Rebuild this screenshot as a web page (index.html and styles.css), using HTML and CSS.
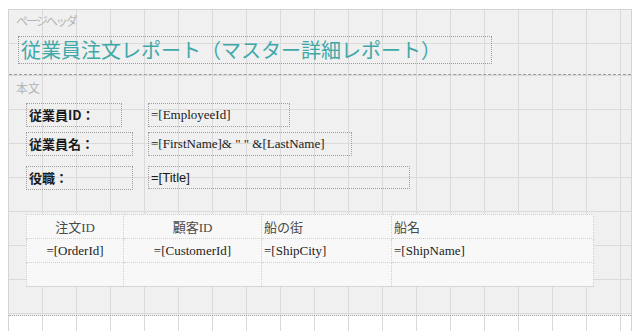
FILE: index.html
```html
<!DOCTYPE html>
<html lang="ja">
<head>
  <meta charset="UTF-8">
  <title>従業員注文レポート</title>
  <link rel="stylesheet" href="styles.css">
</head>
<body>
  <div class="canvas">
    <!-- ページヘッダ -->
    <section class="band band-header">
      <div class="band-name">ページヘッダ</div>
      <div class="title-box">従業員注文レポート（マスター詳細レポート）</div>
    </section>

    <!-- 本文 -->
    <section class="band band-detail">
      <div class="band-name">本文</div>

      <div class="field-row row-1">
        <div class="field-label label-short">従業員ID：</div>
        <div class="field-value value-1">=[EmployeeId]</div>
      </div>
      <div class="field-row row-2">
        <div class="field-label">従業員名：</div>
        <div class="field-value value-2">=[FirstName]&amp; " " &amp;[LastName]</div>
      </div>
      <div class="field-row row-3">
        <div class="field-label">役職：</div>
        <div class="field-value value-3 sans">=[Title]</div>
      </div>

      <table class="orders">
        <tr class="head">
          <td class="c1 center">注文ID</td>
          <td class="c2 center">顧客ID</td>
          <td class="c3">船の街</td>
          <td class="c4">船名</td>
        </tr>
        <tr>
          <td class="center dark">=[OrderId]</td>
          <td class="center dark">=[CustomerId]</td>
          <td class="dark">=[ShipCity]</td>
          <td class="dark">=[ShipName]</td>
        </tr>
        <tr class="empty">
          <td></td><td></td><td></td><td></td>
        </tr>
      </table>
    </section>

    <section class="band band-footer"></section>
  </div>
</body>
</html>
```

FILE: styles.css
```css
body {
  margin: 9px 0 0 8px;
  background: white;
  font-family: "Noto Sans CJK JP", sans-serif;
}
.canvas {
  width: 622px;
  border: 1px solid #d4d4d4;
  border-bottom: none;
}
.band {
  background-color: #f0f0f0;
  background-image:
    linear-gradient(#dadada 1px, transparent 1px),
    linear-gradient(90deg, #dadada 1px, transparent 1px);
  background-size: 34px 34px;
  background-position: 33px 33px;
}
.band-name {
  color: #b4b4b4;
  font-size: 12px;
  line-height: 16px;
}
.band-header {
  height: 65px;
  padding: 3px 0 0 7px;
  box-sizing: border-box;
  border-bottom: 1px dashed #9c9c9c;
}
.band-header .band-name {
  letter-spacing: -2px;
}
.title-box {
  width: 474px;
  height: 28px;
  box-sizing: border-box;
  margin: 7px 0 0 2px;
  padding-left: 2px;
  border: 1px dotted #9a9a9a;
  color: #3fa9a9;
  font-size: 20px;
  line-height: 25px;
}
.band-detail {
  height: 241px;
  padding: 5px 0 0 17px;
  box-sizing: border-box;
  border-bottom: 1px dotted #a8a8a8;
  background-position: 33px 34px;
}
.band-detail .band-name {
  margin-left: -10px;
}
.field-row {
  display: grid;
  grid-template-columns: 122px auto;
}
.row-1 { margin-top: 7px; }
.row-2 { margin-top: 5px; }
.row-3 { margin-top: 10px; }
.field-label,
.field-value {
  height: 24px;
  box-sizing: border-box;
  border: 1px dotted #a0a0a0;
  line-height: 22px;
  padding-left: 2px;
  font-size: 13px;
  color: #1a1a1a;
}
.field-label {
  width: 107px;
  font-weight: bold;
}
.label-short { width: 96px; }
.field-value {
  font-family: "Liberation Serif", "Noto Sans CJK JP", serif;
}
.field-value.sans {
  font-family: "Liberation Sans", sans-serif;
}
.value-1 { width: 142px; }
.value-2 { width: 204px; }
.value-3 { width: 262px; height: 23px; }

.orders {
  margin-top: 24px;
  border-collapse: collapse;
  background: #f8f8f8;
  border: 1px dotted #a8a8a8;
  border-bottom: 1px solid #d6d6d6;
  font-family: "Liberation Serif", "Noto Sans CJK JP", serif;
  font-size: 13px;
  color: #4a4a4a;
}
.orders td {
  height: 24px;
  padding: 0 0 0 2px;
  border: 1px dotted #cfcfcf;
  box-sizing: border-box;
}
.orders .c1 { width: 97px; }
.orders .c2 { width: 138px; }
.orders .c3 { width: 130px; }
.orders .c4 { width: 202px; }
.orders .center {
  text-align: center;
  padding: 0;
}
.orders .dark { color: #222; }

.band-footer {
  height: 20px;
  background-color: white;
  background-image: linear-gradient(90deg, #dadada 1px, transparent 1px);
  background-size: 34px 34px;
  background-position: 33px 0;
}
```
